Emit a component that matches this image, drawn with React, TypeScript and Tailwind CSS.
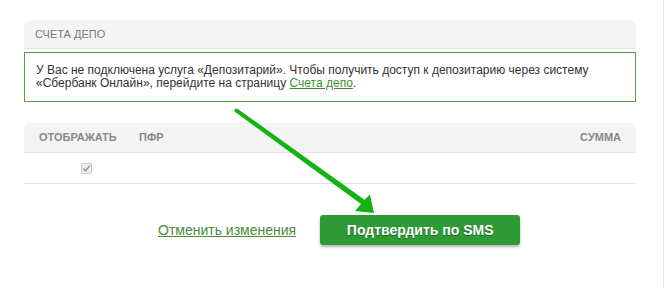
import React from 'react'

// Блок «Счета депо» с таблицей и кнопкой подтверждения
export default function App() {
  return (
    <div
      className="relative w-[664px] h-[288px] bg-white border-r border-[#e6e6e6] overflow-hidden"
      style={{ fontFamily: '"Liberation Sans", Arial, sans-serif' }}
    >
      <div className="pt-[20px] pl-[24px] pr-[27px]">
        {/* Заголовок секции */}
        <div className="h-[29px] bg-[#f4f4f4] rounded-t-[6px] border-b border-[#e6e6e6] flex items-center px-[11px]">
          <span className="text-[11px] text-[#7a7a7a] uppercase">Счета депо</span>
        </div>

        {/* Сообщение */}
        <div className="mt-[3px] h-[50px] border border-[#5a9e45] px-[11px] pt-[11px] text-[12px] leading-[13px] text-[#333]">
          У Вас не подключена услуга «Депозитарий». Чтобы получить доступ к депозитарию через систему
          <br />
          «Сбербанк Онлайн», перейдите на страницу{' '}
          <a href="#" className="text-[#3f8f2f] underline">
            Счета депо
          </a>
          .
        </div>

        {/* Таблица */}
        <div className="mt-[21px]">
          <div className="h-[30px] bg-[#f4f4f4] rounded-t-[6px] border-b border-[#e2e2e2] flex items-center text-[11px] font-bold text-[#888] uppercase">
            <span className="pl-[15px] w-[115px]">Отображать</span>
            <span>ПФР</span>
            <span className="ml-auto pr-[15px]">Сумма</span>
          </div>
          <div className="h-[31px] border-b border-[#e2e2e2] flex items-center">
            <span className="ml-[57px] w-[11px] h-[11px] rounded-[2px] border border-[#c9c9c9] bg-[#efefef] flex items-center justify-center">
              <svg width="9" height="9" viewBox="0 0 10 10">
                <path d="M1.5 5.2 L4 7.6 L8.6 2" fill="none" stroke="#9a9a9a" strokeWidth="1.8" />
              </svg>
            </span>
          </div>
        </div>

        {/* Кнопки */}
        <div className="mt-[31px] flex items-center pl-[134px] gap-[24px]">
          <a href="#" className="text-[14px] text-[#4a8c3b] underline">
            Отменить изменения
          </a>
          <button className="w-[200px] h-[30px] rounded-[3px] bg-[#2e9a36] text-white text-[14px] font-bold shadow-[0_2px_3px_rgba(0,0,0,0.3)] [text-shadow:0_1px_1px_rgba(0,0,0,0.35)]">
            Подтвердить по SMS
          </button>
        </div>
      </div>

      {/* Стрелка-подсказка */}
      <svg className="absolute left-0 top-0 pointer-events-none" width="665" height="288">
        <circle cx="236.4" cy="110.4" r="1.9" fill="#14b314" />
        <polygon
          points="237.5,108.8 364.5,199.8 370,194.5 374,213 355,211 361,204 235.2,112"
          fill="#14b314"
        />
      </svg>
    </div>
  )
}
